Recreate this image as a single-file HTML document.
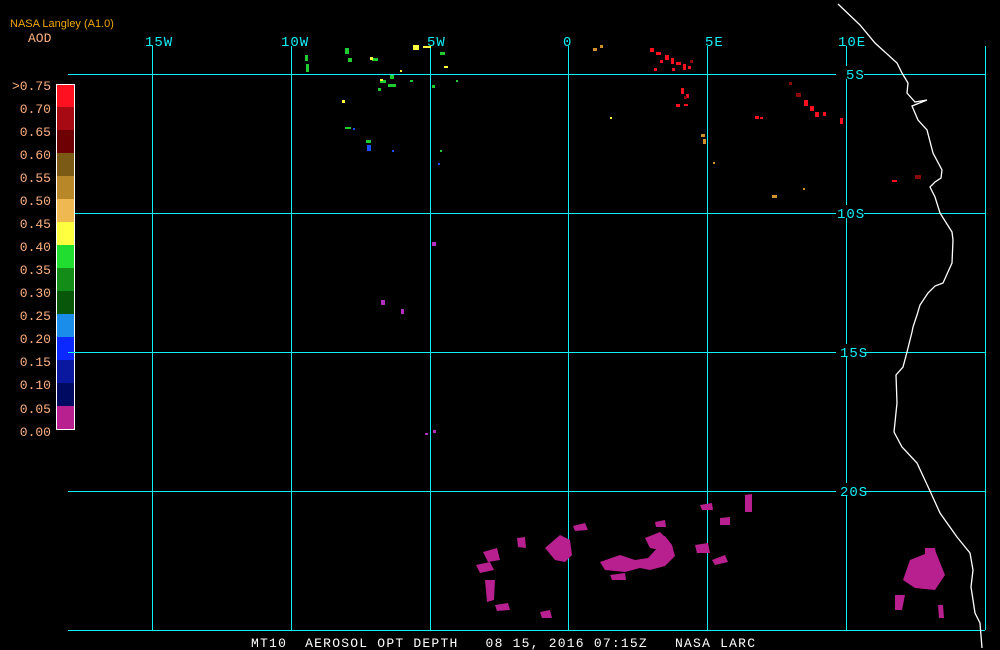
<!DOCTYPE html>
<html><head><meta charset="utf-8"><style>
html,body{margin:0;padding:0;background:#000;width:1000px;height:650px;overflow:hidden}
svg{display:block}
text{font-family:"Liberation Mono",monospace}
</style></head><body>
<svg width="1000" height="650" viewBox="0 0 1000 650" xmlns="http://www.w3.org/2000/svg">
<rect width="1000" height="650" fill="#000"/>
<!-- grid -->
<g stroke="#10f0f8" stroke-width="1.2" shape-rendering="crispEdges">
<line x1="68" y1="74.5" x2="836" y2="74.5"/><line x1="864" y1="74.5" x2="985" y2="74.5"/>
<line x1="68" y1="213.5" x2="836" y2="213.5"/><line x1="864" y1="213.5" x2="985" y2="213.5"/>
<line x1="68" y1="352.5" x2="836" y2="352.5"/><line x1="864" y1="352.5" x2="985" y2="352.5"/>
<line x1="68" y1="491.5" x2="836" y2="491.5"/><line x1="864" y1="491.5" x2="985" y2="491.5"/>
<line x1="68" y1="630.5" x2="985" y2="630.5"/>
<line x1="152.5" y1="46" x2="152.5" y2="630"/>
<line x1="291.5" y1="46" x2="291.5" y2="630"/>
<line x1="430.5" y1="46" x2="430.5" y2="630"/>
<line x1="568.5" y1="46" x2="568.5" y2="630"/>
<line x1="707.5" y1="46" x2="707.5" y2="630"/>
<line x1="846.5" y1="46" x2="846.5" y2="66"/><line x1="846.5" y1="79" x2="846.5" y2="205"/><line x1="846.5" y1="218" x2="846.5" y2="344"/><line x1="846.5" y1="357" x2="846.5" y2="483"/><line x1="846.5" y1="496" x2="846.5" y2="630"/>
<line x1="985.5" y1="46" x2="985.5" y2="630"/>
</g>
<g fill="#10f0f8" font-size="14" letter-spacing="1">
<text x="145" y="46">15W</text><text x="281" y="46">10W</text><text x="427" y="46">5W</text>
<text x="563" y="46">0</text><text x="705" y="46">5E</text><text x="838" y="46">10E</text>
<text x="846" y="79">5S</text><text x="837" y="218">10S</text><text x="840" y="357">15S</text><text x="840" y="496">20S</text>
</g>
<!-- coastline -->
<polyline fill="none" stroke="#fff" stroke-width="1.3" points="838,4 860,25 875,43 897,63 902,73 908,83 907,93 915,102 927,100 912,106 918,120 927,130 933,153 942,170 941,178 935,182 930,187 935,197 940,213 952,232 953,240 952,263 943,283 935,286 928,293 920,305 917,315 913,327 912,332 907,352 903,367 896,375 897,403 894,432 902,447 917,463 930,491 940,513 957,537 970,553 973,570 971,587 975,613 980,623 982,648"/>
<!-- legend -->
<g shape-rendering="crispEdges">
<rect x="56" y="84" width="19" height="23" fill="#ff1020"/>
<rect x="56" y="107" width="19" height="23" fill="#a80a14"/>
<rect x="56" y="130" width="19" height="23" fill="#6e0004"/>
<rect x="56" y="153" width="19" height="23" fill="#7a5a14"/>
<rect x="56" y="176" width="19" height="23" fill="#b88828"/>
<rect x="56" y="199" width="19" height="23" fill="#f0b850"/>
<rect x="56" y="222" width="19" height="23" fill="#ffff40"/>
<rect x="56" y="245" width="19" height="23" fill="#20dd30"/>
<rect x="56" y="268" width="19" height="23" fill="#148c18"/>
<rect x="56" y="291" width="19" height="23" fill="#08560a"/>
<rect x="56" y="314" width="19" height="23" fill="#1a8cea"/>
<rect x="56" y="337" width="19" height="23" fill="#0a28ff"/>
<rect x="56" y="360" width="19" height="23" fill="#0a18a0"/>
<rect x="56" y="383" width="19" height="23" fill="#000a60"/>
<rect x="56" y="406" width="19" height="24" fill="#b82090"/>
<rect x="56.5" y="84.5" width="18" height="345" fill="none" stroke="#fff" stroke-width="1"/>
</g>
<line x1="68" y1="352.5" x2="75" y2="352.5" stroke="#10f0f8"/>
<text x="10" y="27" fill="#f0a800" font-size="11" style="font-family:'Liberation Sans',sans-serif">NASA Langley (A1.0)</text>
<text x="28" y="42" fill="#ffb080" font-size="13">AOD</text>
<g fill="#ffb080" font-size="13" text-anchor="end">
<text x="51" y="90">&gt;0.75</text><text x="51" y="113">0.70</text><text x="51" y="136">0.65</text>
<text x="51" y="159">0.60</text><text x="51" y="182">0.55</text><text x="51" y="205">0.50</text>
<text x="51" y="228">0.45</text><text x="51" y="251">0.40</text><text x="51" y="274">0.35</text>
<text x="51" y="297">0.30</text><text x="51" y="320">0.25</text><text x="51" y="343">0.20</text>
<text x="51" y="366">0.15</text><text x="51" y="389">0.10</text><text x="51" y="413">0.05</text>
<text x="51" y="436">0.00</text>
</g>
<!-- aerosol blobs: north -->
<g fill="#20cc30">
<rect x="305" y="55" width="3" height="6"/><rect x="306" y="64" width="3" height="8"/><rect x="345" y="48" width="4" height="6"/><rect x="348" y="58" width="4" height="4"/>
<rect x="372" y="58" width="6" height="3"/><rect x="380" y="80" width="6" height="3"/><rect x="390" y="75" width="4" height="4"/>
<rect x="388" y="84" width="8" height="3"/><rect x="345" y="127" width="6" height="2"/><rect x="366" y="140" width="5" height="3"/>
<rect x="432" y="85" width="3" height="3"/><rect x="440" y="52" width="5" height="3"/><rect x="456" y="80" width="2" height="2"/>
<rect x="410" y="80" width="3" height="2"/><rect x="440" y="150" width="2" height="2"/><rect x="378" y="88" width="3" height="3"/>
</g>
<g fill="#ffff40">
<rect x="413" y="45" width="6" height="5"/><rect x="423" y="46" width="8" height="2"/><rect x="370" y="57" width="3" height="3"/>
<rect x="400" y="70" width="2" height="2"/><rect x="444" y="66" width="4" height="2"/><rect x="342" y="100" width="3" height="3"/>
<rect x="610" y="117" width="2" height="2"/><rect x="380" y="79" width="3" height="2"/>
</g>
<g fill="#1a50ff"><rect x="367" y="145" width="4" height="6"/><rect x="353" y="128" width="2" height="2"/><rect x="438" y="163" width="2" height="2"/><rect x="392" y="150" width="2" height="2"/></g>
<g fill="#ff1020">
<rect x="650" y="48" width="4" height="4"/><rect x="656" y="52" width="5" height="3"/><rect x="665" y="55" width="4" height="5"/>
<rect x="671" y="58" width="3" height="6"/><rect x="676" y="62" width="5" height="3"/><rect x="683" y="64" width="3" height="6"/>
<rect x="672" y="68" width="3" height="3"/><rect x="660" y="60" width="3" height="3"/><rect x="688" y="66" width="3" height="3"/>
<rect x="681" y="88" width="3" height="6"/><rect x="686" y="94" width="3" height="4"/><rect x="676" y="104" width="4" height="3"/><rect x="684" y="104" width="4" height="2"/>
<rect x="804" y="100" width="4" height="6"/><rect x="810" y="106" width="4" height="5"/><rect x="815" y="112" width="4" height="5"/><rect x="823" y="112" width="3" height="4"/>
<rect x="755" y="116" width="4" height="3"/><rect x="760" y="117" width="3" height="2"/><rect x="840" y="118" width="3" height="6"/>
<rect x="892" y="180" width="5" height="2"/><rect x="654" y="68" width="3" height="3"/>
</g>
<g fill="#8a0a0a"><rect x="796" y="93" width="5" height="4"/><rect x="915" y="175" width="6" height="4"/><rect x="789" y="82" width="3" height="3"/><rect x="684" y="96" width="3" height="3"/><rect x="690" y="60" width="3" height="3"/></g>
<g fill="#d09030"><rect x="701" y="134" width="4" height="3"/><rect x="703" y="139" width="3" height="5"/><rect x="772" y="195" width="5" height="3"/><rect x="593" y="48" width="4" height="3"/><rect x="600" y="45" width="3" height="3"/><rect x="713" y="162" width="2" height="2"/><rect x="803" y="188" width="2" height="2"/></g>
<g fill="#b030c0"><rect x="432" y="242" width="4" height="4"/><rect x="381" y="300" width="4" height="5"/><rect x="401" y="309" width="3" height="5"/><rect x="433" y="430" width="3" height="3"/><rect x="425" y="433" width="3" height="2"/></g>
<!-- south magenta -->
<g fill="#b82090">
<path d="M600 562 L620 555 L635 560 L648 558 L660 545 L655 540 L665 536 L672 545 L675 556 L665 566 L650 570 L640 568 L625 572 L605 570 Z"/>
<path d="M645 538 L660 532 L668 540 L660 550 L650 548 Z"/>
<path d="M545 548 L560 535 L570 540 L572 555 L565 562 L555 560 Z"/>
<path d="M483 552 L497 548 L500 560 L488 562 Z"/>
<path d="M476 565 L490 562 L494 570 L480 573 Z"/>
<path d="M485 580 L495 580 L494 600 L487 602 Z"/>
<path d="M495 605 L508 603 L510 610 L497 611 Z"/>
<path d="M610 575 L625 573 L626 580 L612 580 Z"/>
<path d="M695 545 L708 543 L710 553 L697 553 Z"/>
<path d="M712 560 L725 555 L728 562 L715 565 Z"/>
<path d="M517 538 L525 537 L526 548 L518 547 Z"/>
<path d="M573 526 L585 523 L588 530 L575 531 Z"/>
<path d="M700 505 L712 503 L713 510 L702 510 Z"/>
<path d="M745 495 L752 494 L752 512 L745 512 Z"/>
<path d="M910 560 L935 550 L945 575 L935 590 L915 588 L903 580 Z"/>
<path d="M925 548 L935 548 L937 560 L925 560 Z"/>
<path d="M895 595 L905 595 L902 610 L895 610 Z"/>
<path d="M938 605 L943 605 L944 618 L939 618 Z"/>
<path d="M540 612 L550 610 L552 618 L542 618 Z"/>
<path d="M720 518 L730 517 L730 525 L720 525 Z"/>
<path d="M655 522 L665 520 L666 527 L656 527 Z"/>
</g>
<!-- title -->
<text x="251" y="647" fill="#fff" font-size="13" textLength="504" lengthAdjust="spacing" xml:space="preserve">MT10  AEROSOL OPT DEPTH   08 15, 2016 07:15Z   NASA LARC</text>
</svg>
</body></html>
